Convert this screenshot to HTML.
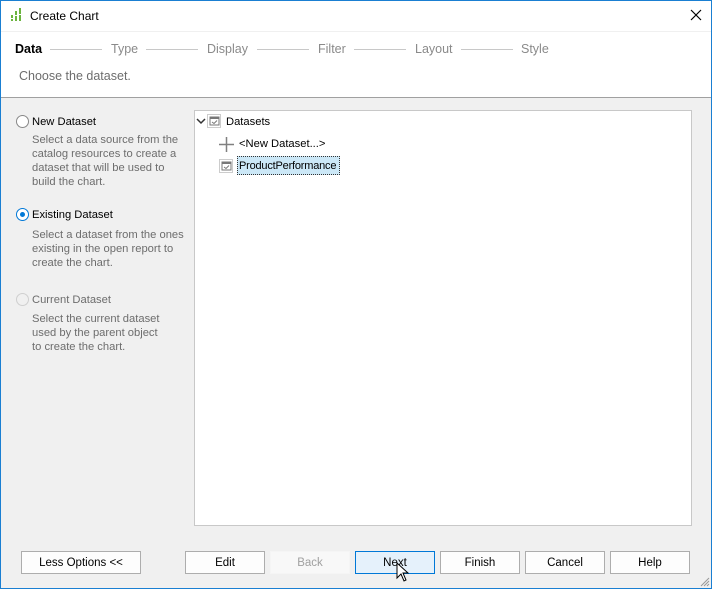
<!DOCTYPE html>
<html><head><style>
*{margin:0;padding:0;box-sizing:border-box}
body{width:712px;height:589px;overflow:hidden;font-family:"Liberation Sans",sans-serif;font-size:11px;color:#000;position:relative;background:#f0f0f0}
.a{position:absolute;white-space:nowrap}
.win{position:absolute;left:0;top:0;width:712px;height:589px;border:1px solid #1a7fd2}
.hdr{position:absolute;left:1px;top:1px;width:710px;height:97px;background:#fff;border-bottom:1px solid #a0a0a0}
.ln{position:absolute;height:1px;background:#c8c8c8;top:49px}
.step{color:#8a8a8a;font-size:12.5px}
.desc{color:#6d6d6d;line-height:14px;font-size:11.2px}
.rad{position:absolute;width:13px;height:13px;border-radius:50%;border:1px solid #888;background:#fff}
.btn{position:absolute;top:551px;height:23px;border:1px solid #adadad;background:#fdfdfd;text-align:center;line-height:22px;font-size:11.5px}
</style></head><body>
<div class="hdr"></div>
<div class="a" style="left:1px;top:31px;width:710px;height:1px;background:#f0f0f0"></div>
<svg class="a" style="left:10px;top:7px" width="14" height="16"><g fill="#6bb43f"><rect x="1" y="8" width="2" height="3"/><rect x="1" y="12" width="2" height="2"/><rect x="5" y="4" width="2" height="4"/><rect x="5" y="9" width="2" height="5"/><rect x="9" y="1" width="2" height="6"/><rect x="9" y="8" width="2" height="6"/></g></svg>
<div class="a" style="left:30px;top:9px;font-size:12px">Create Chart</div>
<svg class="a" style="left:690px;top:9px" width="12" height="12"><path d="M1 1L11 11M11 1L1 11" stroke="#000" stroke-width="1.2"/></svg>
<div class="a" style="left:15px;top:42px;font-weight:bold;font-size:12.5px">Data</div>
<div class="ln" style="left:50px;width:52px"></div>
<div class="a step" style="left:111px;top:42px">Type</div>
<div class="ln" style="left:146px;width:52px"></div>
<div class="a step" style="left:207px;top:42px">Display</div>
<div class="ln" style="left:257px;width:52px"></div>
<div class="a step" style="left:318px;top:42px">Filter</div>
<div class="ln" style="left:354px;width:52px"></div>
<div class="a step" style="left:415px;top:42px">Layout</div>
<div class="ln" style="left:461px;width:52px"></div>
<div class="a step" style="left:521px;top:42px">Style</div>
<div class="a" style="left:19px;top:69px;color:#6d6d6d;font-size:12.5px">Choose the dataset.</div>

<div class="rad" style="left:16px;top:115px"></div>
<div class="a" style="left:32px;top:116px;font-size:11.2px">New Dataset</div>
<div class="a desc" style="left:32px;top:133px">Select a data source from the<br>catalog resources to create a<br>dataset that will be used to<br>build the chart.</div>
<div class="rad" style="left:16px;top:208px;border-color:#0078d7"><div style="position:absolute;left:3px;top:3px;width:5px;height:5px;border-radius:50%;background:#0078d7"></div></div>
<div class="a" style="left:32px;top:209px;font-size:11.2px">Existing Dataset</div>
<div class="a desc" style="left:32px;top:228px">Select a dataset from the ones<br>existing in the open report to<br>create the chart.</div>
<div class="rad" style="left:16px;top:293px;border-color:#cfcfcf;background:#f0f0f0"></div>
<div class="a" style="left:32px;top:294px;color:#6d6d6d;font-size:11.2px">Current Dataset</div>
<div class="a desc" style="left:32px;top:312px">Select the current dataset<br>used by the parent object<br>to create the chart.</div>

<div class="a" style="left:194px;top:110px;width:498px;height:416px;background:#fff;border:1px solid #c8c8c8"></div>
<svg class="a" style="left:196px;top:117px" width="10" height="8"><path d="M1 2L5 6L9 2" stroke="#333" stroke-width="1.5" fill="none"/></svg>
<svg class="a" style="left:207px;top:114px" width="14" height="14"><rect x="0.5" y="0.5" width="13" height="13" fill="none" stroke="#999" stroke-dasharray="1 1"/><rect x="3" y="3" width="9" height="8" fill="#fff" stroke="#777"/><rect x="3" y="3" width="9" height="2" fill="#777"/><path d="M5 8l2 1.5 3-3" stroke="#777" fill="none"/></svg>
<div class="a" style="left:226px;top:116px;font-size:11.2px">Datasets</div>
<svg class="a" style="left:219px;top:137px" width="15" height="15"><path d="M7.5 0V15M0 7.5H15" stroke="#808080" stroke-width="1.5"/></svg>
<div class="a" style="left:239px;top:138px;font-size:11.2px">&lt;New Dataset...&gt;</div>
<svg class="a" style="left:219px;top:159px" width="14" height="14"><rect x="0.5" y="0.5" width="13" height="13" fill="none" stroke="#999" stroke-dasharray="1 1"/><rect x="3" y="3" width="9" height="8" fill="#fff" stroke="#777"/><rect x="3" y="3" width="9" height="2" fill="#777"/><path d="M5 8l2 1.5 3-3" stroke="#777" fill="none"/></svg>
<div class="a" style="left:237px;top:156px;width:103px;height:19px;background:#cce8f7;border:1px dotted #333;padding:3px 0 0 1px;font-size:11px;letter-spacing:-0.2px">ProductPerformance</div>

<div class="btn" style="left:21px;width:120px">Less Options &lt;&lt;</div>
<div class="btn" style="left:185px;width:80px">Edit</div>
<div class="btn" style="left:270px;width:80px;border-color:#f5f5f5;background:#f8f8f8;color:#a0a0a0">Back</div>
<div class="btn" style="left:355px;width:80px;border-color:#0078d7;background:#e5f1fb">Next</div>
<div class="btn" style="left:440px;width:80px">Finish</div>
<div class="btn" style="left:525px;width:80px">Cancel</div>
<div class="btn" style="left:610px;width:80px">Help</div>
<svg class="a" style="left:396px;top:562px" width="14" height="20"><path d="M1 1V16L5 12L8 19L10 18L7 11H12Z" fill="#fff" stroke="#000"/></svg>
<svg class="a" style="left:700px;top:577px" width="10" height="10"><path d="M9 1L1 9M9 4L4 9M9 7L7 9" stroke="#999"/></svg>
<div class="win"></div>
</body></html>
